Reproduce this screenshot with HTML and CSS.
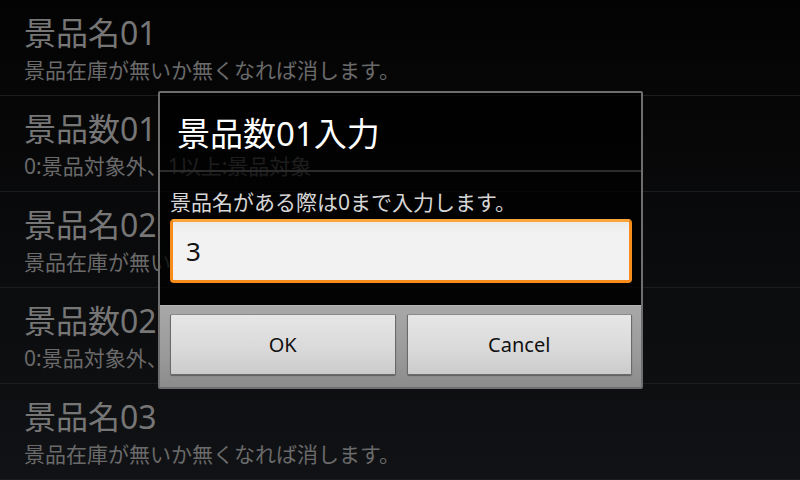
FILE: index.html
```html
<!DOCTYPE html>
<html lang="ja">
<head>
    <meta charset="UTF-8">
    <meta name="viewport" content="width=device-width, initial-scale=1.0">
    <title>景品設定</title>
    <link rel="stylesheet" href="styles.css">
</head>
<body>
    <div class="screen">
        <ul class="pref-list">
            <li class="pref-item">
                <div class="pref-title">景品名01</div>
                <div class="pref-summary">景品在庫が無いか無くなれば消します。</div>
            </li>
            <li class="pref-item">
                <div class="pref-title">景品数01</div>
                <div class="pref-summary">0:景品対象外、1以上:景品対象</div>
            </li>
            <li class="pref-item">
                <div class="pref-title">景品名02</div>
                <div class="pref-summary">景品在庫が無いか無くなれば消します。</div>
            </li>
            <li class="pref-item">
                <div class="pref-title">景品数02</div>
                <div class="pref-summary">0:景品対象外、1以上:景品対象</div>
            </li>
            <li class="pref-item">
                <div class="pref-title">景品名03</div>
                <div class="pref-summary">景品在庫が無いか無くなれば消します。</div>
            </li>
        </ul>

        <div class="dialog">
            <div class="dialog-title">景品数01入力</div>
            <div class="dialog-body">
                <div class="dialog-message">景品名がある際は0まで入力します。</div>
                <input class="dialog-input" type="text" value="3">
            </div>
            <div class="dialog-buttons">
                <button class="dialog-button">OK</button>
                <button class="dialog-button">Cancel</button>
            </div>
        </div>
    </div>
</body>
</html>
```

FILE: styles.css
```css
body {
    margin: 0;
    font-family: "Noto Sans", "Noto Sans CJK JP", sans-serif;
    background: #000;
}
.screen {
    position: relative;
    width: 800px;
    height: 480px;
    overflow: hidden;
    background: linear-gradient(#030303, #111215);
}
.pref-list {
    list-style: none;
    margin: 0;
    padding: 0;
}
.pref-item {
    height: 96px;
    box-sizing: border-box;
    padding: 14px 24px 0;
    border-bottom: 1px solid #1b1c1e;
}
.pref-title {
    font-size: 32px;
    line-height: 38px;
    color: #767676;
}
.pref-summary {
    margin-top: 5px;
    font-size: 21px;
    line-height: 26px;
    color: #6a6a6a;
}
.dialog {
    position: absolute;
    left: 158px;
    top: 91px;
    width: 485px;
    height: 298px;
    box-sizing: border-box;
    border: 2px solid #6e6e6e;
    border-radius: 2px;
    display: flex;
    flex-direction: column;
}
.dialog-title {
    height: 77px;
    padding-left: 17px;
    display: flex;
    align-items: center;
    font-size: 33px;
    color: #fff;
    background: rgba(0, 0, 0, 0.72);
    border-bottom: 2px solid #2b2b2b;
}
.dialog-body {
    flex: 1;
    padding: 16px 9px 0 10px;
    background: rgba(0, 0, 0, 0.72);
}
.dialog-message {
    font-size: 21px;
    line-height: 28px;
    color: #d6d6d6;
    margin-bottom: 3px;
}
.dialog-input {
    display: block;
    width: 100%;
    height: 64px;
    box-sizing: border-box;
    padding: 0 13px;
    border: 3px solid #f98d1c;
    border-top-color: #fba43a;
    border-radius: 4px;
    background: linear-gradient(#ebebeb, #f2f2f2 20%, #f2f2f2);
    font-family: "Noto Sans", sans-serif;
    font-size: 26px;
    color: #111;
    outline: none;
}
.dialog-buttons {
    height: 82px;
    box-sizing: border-box;
    padding: 8px 9px 0 10px;
    display: flex;
    gap: 11px;
    align-items: flex-start;
    background: linear-gradient(#a8a8a8, #9a9a9a 60%, #8c8c8c);
    border-top: 1px solid #b4b4b4;
}
.dialog-button {
    flex: 1;
    height: 61px;
    border: 1px solid #6a6a6a;
    border-top-color: #8a8a8a;
    border-radius: 2px;
    background: linear-gradient(#e6e6e6, #d9d9d9 60%, #cbcbcb);
    font-family: "Noto Sans", sans-serif;
    font-size: 20px;
    color: #111;
    box-shadow: 0 1px 1px rgba(0, 0, 0, 0.35);
}
```
